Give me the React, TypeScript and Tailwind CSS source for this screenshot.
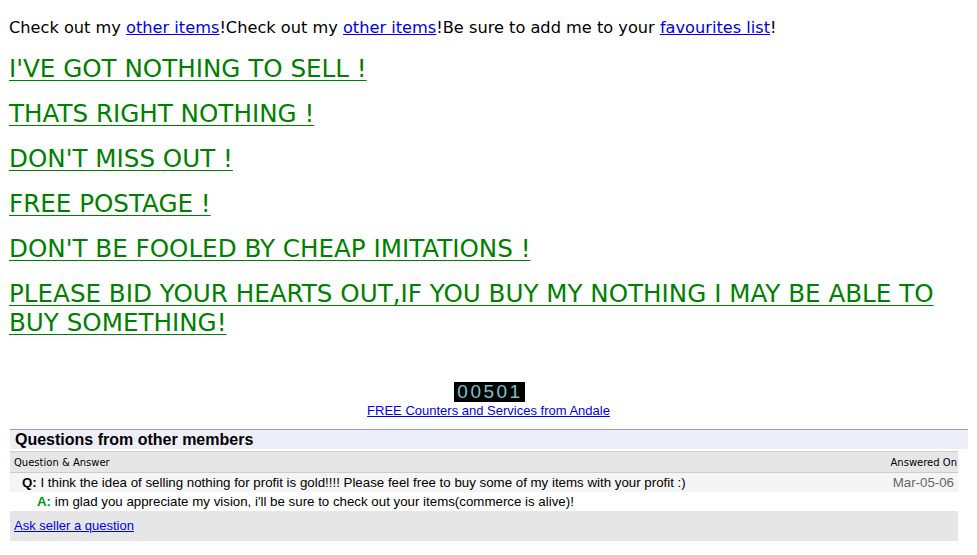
const verdana = { fontFamily: '"DejaVu Sans", Verdana, sans-serif' };

const headings = [
  "I'VE GOT NOTHING TO SELL !",
  'THATS RIGHT NOTHING !',
  "DON'T MISS OUT !",
  'FREE POSTAGE !',
  "DON'T BE FOOLED BY CHEAP IMITATIONS !",
  'PLEASE BID YOUR HEARTS OUT,IF YOU BUY MY NOTHING I MAY BE ABLE TO BUY SOMETHING!',
];

export default function App() {
  return (
    <div className="bg-white min-h-[555px] px-[9px] pt-[18px] text-black font-['DejaVu_Sans',Verdana,sans-serif]">
      <p className="text-[16.2px] leading-[19px]">
        Check out my <a href="#" className="text-[#0000ee] underline">other items</a>!Check out my{' '}
        <a href="#" className="text-[#0000ee] underline">other items</a>!Be sure to add me to your{' '}
        <a href="#" className="text-[#0000ee] underline">favourites list</a>!
      </p>

      <div className="mt-[17px] flex flex-col gap-[16px] pr-[20px]">
        {headings.map((h) => (
          <p key={h} className="text-[24.6px] leading-[29px] text-[#008000] underline decoration-1 underline-offset-[3px]">
            {h}
          </p>
        ))}
      </div>

      <div className="mt-[45px] flex flex-col items-center font-['Liberation_Sans',Arial,sans-serif]">
        <div className="bg-black h-[20px] pl-[3px] pr-[2px] ml-[2px] flex items-center text-[#7cc4c4] text-[19px] leading-[20px] tracking-[2.5px] font-light">
          00501
        </div>
        <a href="#" className="text-[#0000ee] underline text-[13px] leading-[16px] mt-[1px]">
          FREE Counters and Services from Andale
        </a>
      </div>

      <div className="mt-[10px] ml-[1px] font-['Liberation_Sans',Arial,sans-serif]">
        <div className="border-t border-[#9999cc] bg-[#eeeef8] h-[20px] px-[5px] flex items-center">
          <span className="font-bold text-[16px] leading-[18px]">Questions from other members</span>
        </div>
        <div className="mt-[2px] mr-[10px]">
          <div className="border-t border-b border-[#cccccc] bg-[#e6e6e6] h-[22px] pl-[4px] pr-[1px] flex items-center justify-between text-[10px]" style={verdana}>
            <span>Question &amp; Answer</span>
            <span>Answered On</span>
          </div>
          <div className="bg-[#f5f5f5] h-[19px] flex items-center justify-between text-[13.3px] pl-[12px] pr-[4px]">
            <span>
              <b>Q:</b> I think the idea of selling nothing for profit is gold!!!! Please feel free to buy some of my items with your profit :)
            </span>
            <span className="text-[#666666]">Mar-05-06</span>
          </div>
          <div className="h-[19px] flex items-center text-[13.3px] pl-[27px]">
            <span>
              <b className="text-[#009900]">A:</b> im glad you appreciate my vision, i'll be sure to check out your items(commerce is alive)!
            </span>
          </div>
          <div className="bg-[#e6e6e6] h-[30px] flex items-center px-[4px]">
            <a href="#" className="text-[#0000ee] underline text-[13px]">Ask seller a question</a>
          </div>
        </div>
      </div>
    </div>
  );
}
